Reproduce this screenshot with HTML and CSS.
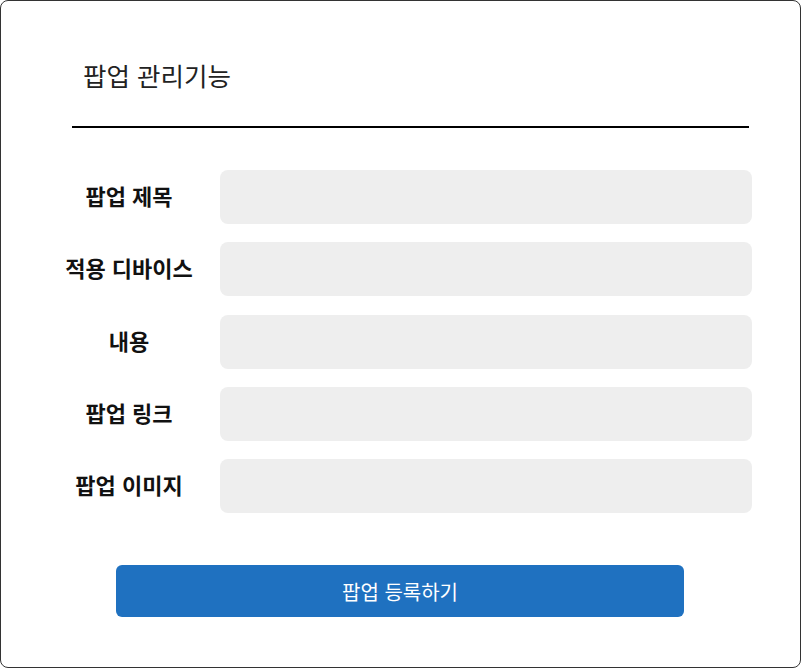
FILE: index.html
```html
<!DOCTYPE html>
<html lang="ko">
<head>
    <meta charset="UTF-8">
    <meta name="viewport" content="width=device-width, initial-scale=1.0">
    <title>팝업 관리기능</title>
    <link rel="stylesheet" href="styles.css">
</head>
<body>
    <div class="popup-admin">
        <div class="popup-head">
            <h1>팝업 관리기능</h1>
        </div>
        <form class="popup-form">
            <div class="form-row">
                <label for="popup-title">팝업 제목</label>
                <input type="text" id="popup-title">
            </div>
            <div class="form-row">
                <label for="popup-device">적용 디바이스</label>
                <input type="text" id="popup-device">
            </div>
            <div class="form-row">
                <label for="popup-content">내용</label>
                <input type="text" id="popup-content">
            </div>
            <div class="form-row">
                <label for="popup-link">팝업 링크</label>
                <input type="text" id="popup-link">
            </div>
            <div class="form-row">
                <label for="popup-image">팝업 이미지</label>
                <input type="text" id="popup-image">
            </div>
            <button type="button" class="submit-btn">팝업 등록하기</button>
        </form>
    </div>
</body>
</html>
```

FILE: styles.css
```css
body {
    margin: 0;
    font-family: "Noto Sans CJK KR", "Noto Sans", sans-serif;
    background-color: #fff;
}
.popup-admin {
    box-sizing: border-box;
    width: 801px;
    height: 668px;
    border: 1px solid #333;
    border-radius: 8px;
    padding-top: 55px;
}
.popup-head {
    margin: 0 51px 0 71px;
    padding: 0 0 0 11px;
    height: 70px;
    border-bottom: 2px solid #000;
}
.popup-head h1 {
    margin: 0;
    font-size: 25.5px;
    font-weight: 400;
    color: #222;
}
.popup-form {
    display: flex;
    flex-direction: column;
    gap: 18.25px;
    margin: 42px 48px 0 57px;
}
.form-row {
    display: flex;
    align-items: center;
    gap: 20px;
}
.form-row label {
    width: 142px;
    padding-bottom: 4px;
    text-align: center;
    font-size: 22px;
    font-weight: 700;
    color: #111;
}
.form-row input {
    flex: 1;
    height: 54px;
    box-sizing: border-box;
    border: none;
    border-radius: 8px;
    background-color: #eee;
}
.submit-btn {
    align-self: center;
    width: 568px;
    height: 52px;
    margin: 34px 10px 0 0;
    border: none;
    border-radius: 6px;
    background-color: #1f71c0;
    color: #fff;
    font-family: inherit;
    font-size: 20px;
}
```
